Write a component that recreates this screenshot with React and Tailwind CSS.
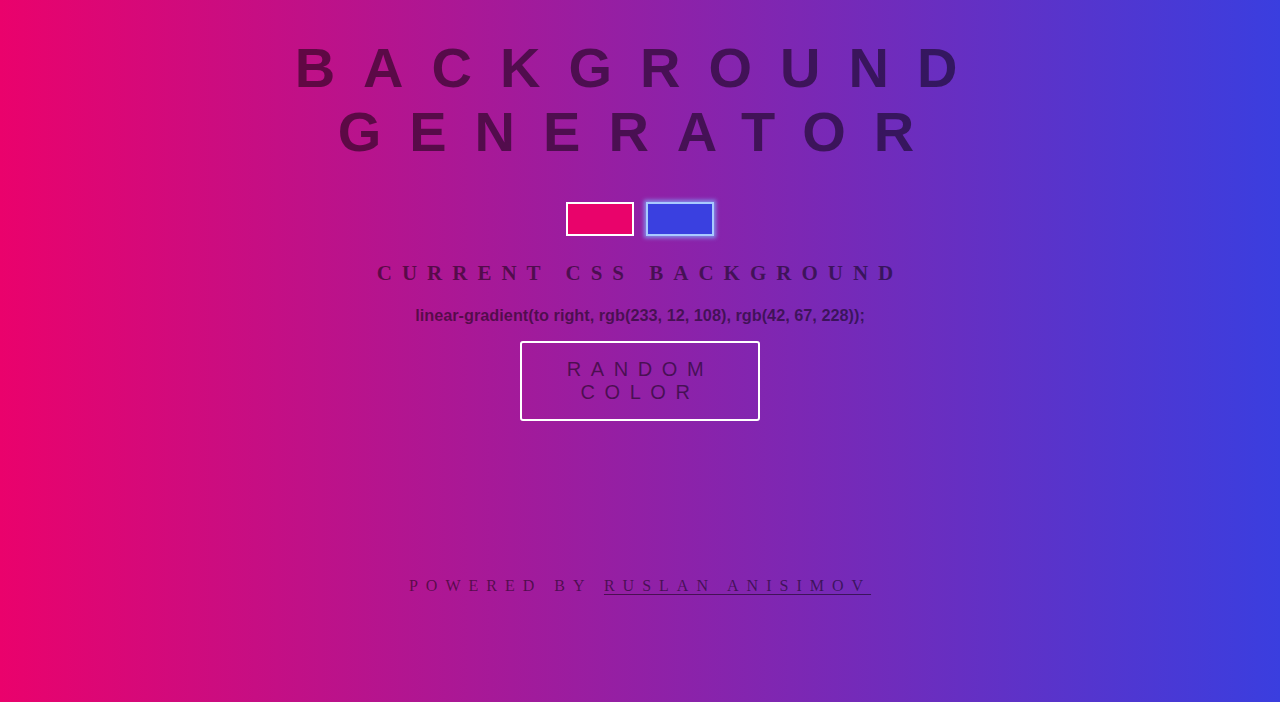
const App = () => {
  return (
    <div className="min-h-[702px] w-full bg-[linear-gradient(to_right,rgb(234,2,108),rgb(58,62,223))] text-[rgba(0,0,0,0.5)] flex flex-col items-center text-center pt-[36px]">
      <h1 className="font-['Liberation_Sans',Arial,sans-serif] font-bold text-[56px] leading-[64px] tracking-[0.5em] w-[760px]">
        BACKGROUND GENERATOR
      </h1>

      <div className="flex gap-[12px] mt-[38px]">
        <div className="w-[68px] h-[34px] border-2 border-white bg-[#e9036b]" />
        <div className="w-[68px] h-[34px] border-2 border-[#a9caff] bg-[#3a40e0] shadow-[0_0_4px_2px_rgba(130,175,255,0.75)]" />
      </div>

      <h3 className="mt-[25px] font-['Liberation_Serif','Times_New_Roman',serif] font-bold text-[21px] leading-[24px] tracking-[10px]">
        CURRENT CSS BACKGROUND
      </h3>

      <p className="mt-[20px] font-['Liberation_Sans',Arial,sans-serif] font-bold text-[16.3px] leading-[20px]">
        linear-gradient(to right, rgb(233, 12, 108), rgb(42, 67, 228));
      </p>

      <button className="mt-[16px] w-[240px] h-[80px] border-2 border-white rounded-[3px] flex items-center justify-center px-[40px] font-['Liberation_Sans',Arial,sans-serif] text-[20px] leading-[23px] tracking-[0.48em] text-[rgba(0,0,0,0.5)]">
        RANDOM COLOR
      </button>

      <p className="mt-[155px] font-['Liberation_Serif','Times_New_Roman',serif] text-[16px] leading-[20px] tracking-[0.5em]">
        POWERED BY{" "}
        <a href="#" className="underline underline-offset-[3px]">
          RUSLAN ANISIMOV
        </a>
      </p>
    </div>
  );
};

export default App;
